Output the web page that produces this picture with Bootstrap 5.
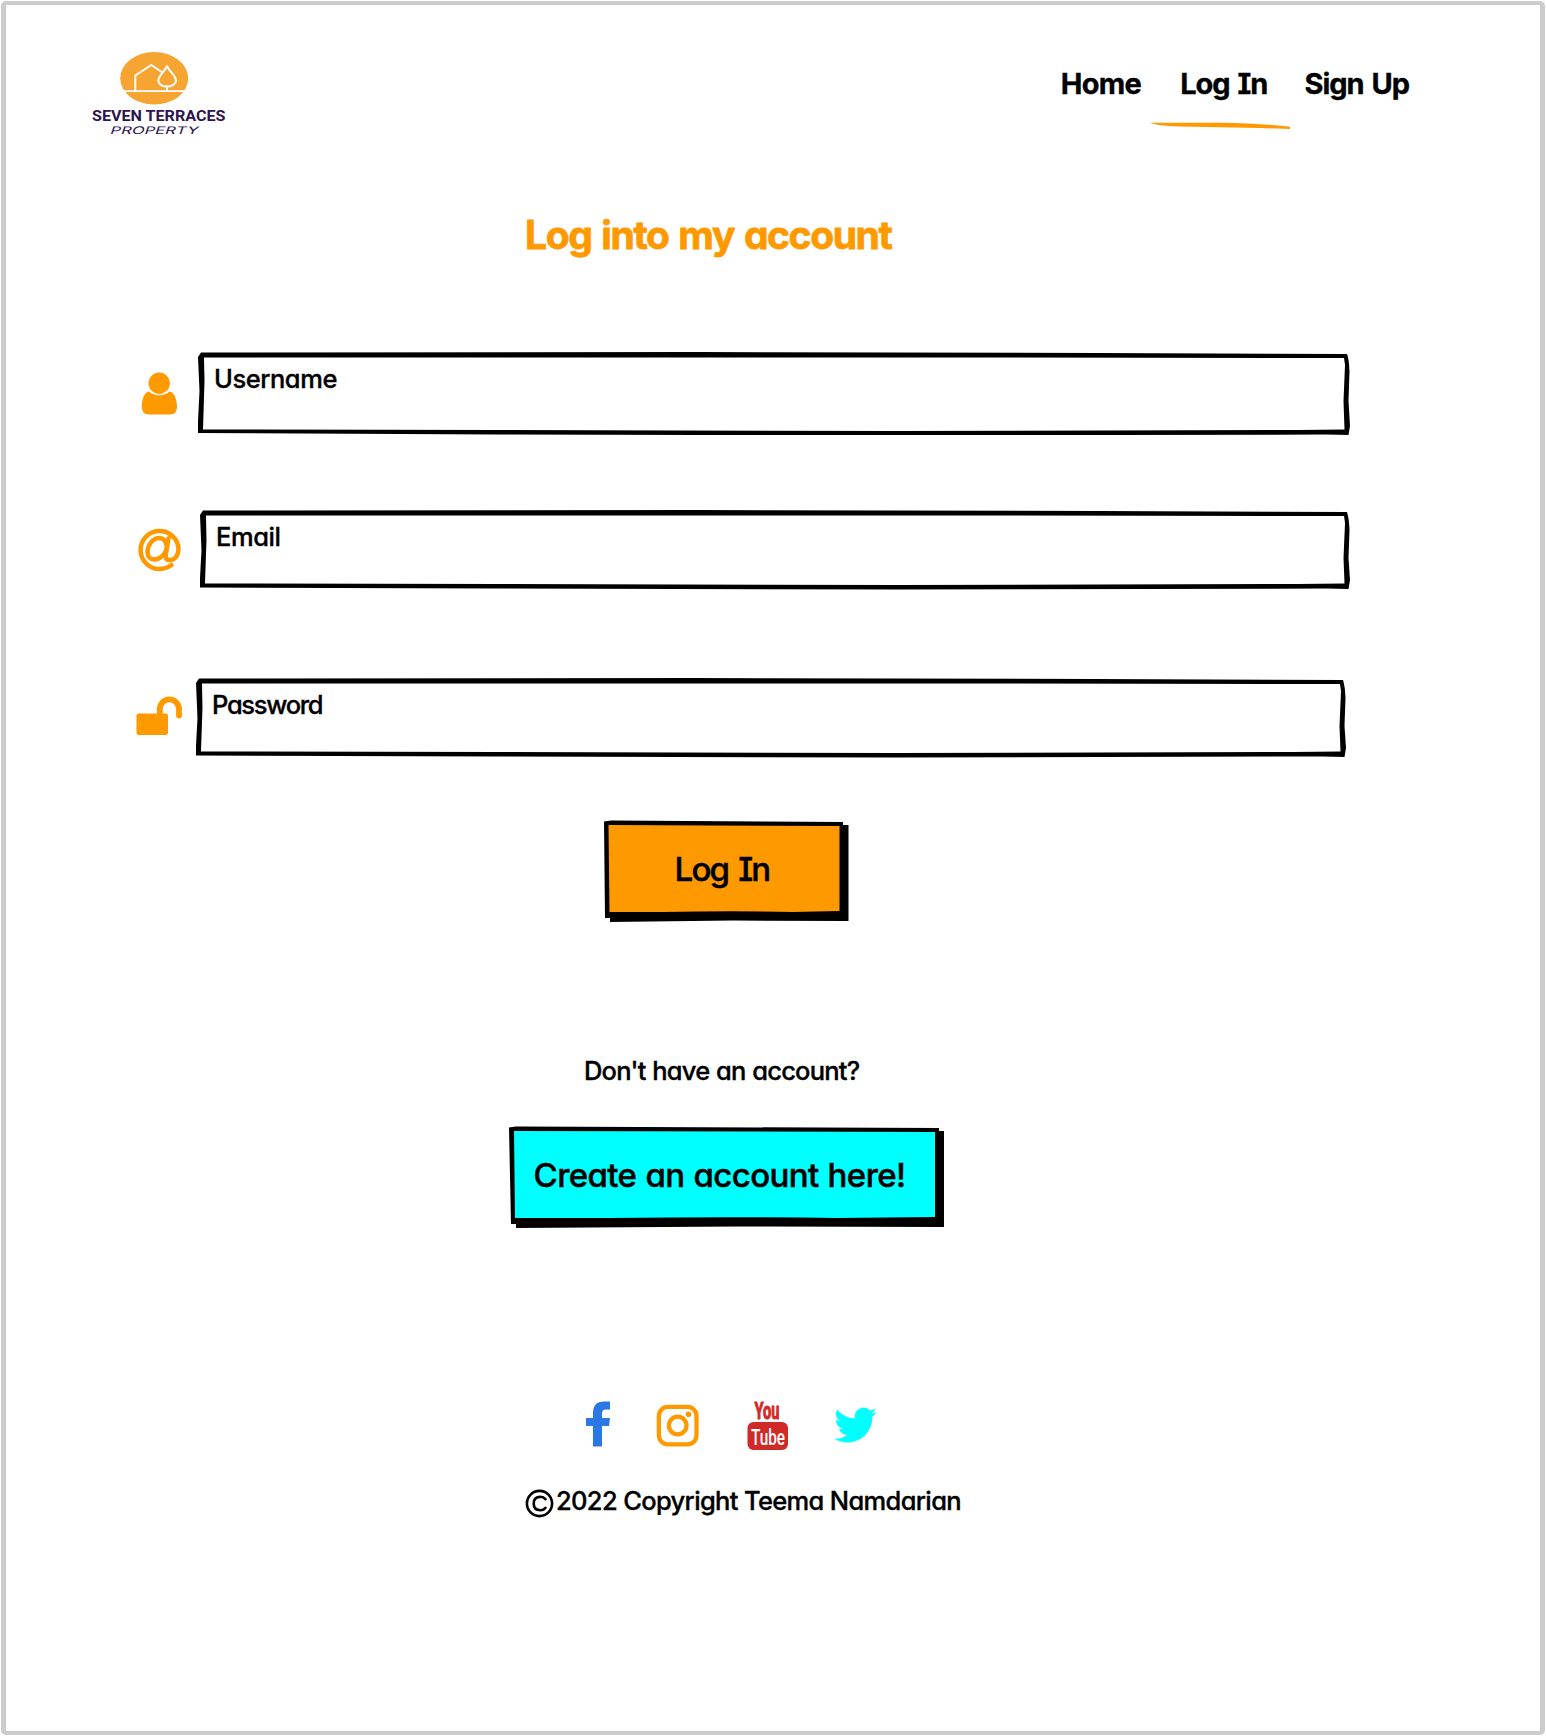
<!DOCTYPE html>
<html lang="en">
<head>
<meta charset="utf-8">
<meta name="viewport" content="width=device-width, initial-scale=1">
<title>Seven Terraces Property - Log In</title>
<link rel="stylesheet" href="https://cdn.jsdelivr.net/npm/bootstrap@5.3.0/dist/css/bootstrap.min.css">
<style>
  body { font-family: Inter, "Noto Sans", sans-serif; font-feature-settings: "cv11", "cv08"; font-weight: 500; color: #000; background: #fff; -webkit-text-stroke: .35px currentColor; stroke-linejoin: round; }
  .page-frame { width: 1544px; height: 1734px; margin: 1px; border: 5px solid #ccc; border-width: 4px 5px; border-radius: 5px; }
  .site-header { padding: 37px 131px 0 79px; height: 140px; }
  .logo-art { width: 150px; height: 100px; -webkit-text-stroke: 0; }
  .menu-links { margin-top: 22px; gap: 37px; }
  .menu-links .nav-link { font-size: 29px; font-weight: 700; line-height: 40px; color: #000; padding: 0; white-space: nowrap; letter-spacing: -1px; word-spacing: 2px; }
  .menu-links .nav-link:first-child { letter-spacing: -.7px; margin-right: 2px; }
  .stroke-line { left: -31px; top: 57px; width: 142px; height: 10px; }
  .page-title { margin: 65px 0 0 519px; font-size: 39px; line-height: 50px; font-weight: 700; color: #f90; letter-spacing: -1.4px; word-spacing: 2.1px; -webkit-text-stroke-width: .8px; }
  .login-form { padding-left: 126px; }
  .field-row { height: 84px; }
  .field-icon { width: 54px; height: 60px; margin-top: 12px; fill: #f90; }
  .sketch-field { width: 1154px; height: 84px; padding: 7px 0 0 17px; font-size: 25.5px; line-height: 40px; letter-spacing: -.45px; }
  .sketch-field label { position: relative; }
  .sketch-bg { left: 0; top: 0; width: 100%; height: 100%; }
  .sketch-btn { padding: 0; border: 0; font-size: 33px; font-weight: 500; line-height: 50px; color: #000; font-feature-settings: inherit; height: 103px; -webkit-text-stroke: .5px #000; }
  .sketch-btn span { position: relative; display: inline-block; padding-bottom: 6px; }
  .btn-login { width: 246px; margin: 58px 0 0 597px; letter-spacing: -1.8px; word-spacing: 3px; }
  .btn-login span { padding-right: 8px; }
  .btn-create { width: 437px; margin: 35px 0 0 502px; letter-spacing: -.6px; word-spacing: .8px; }
  .btn-create span { padding-right: 14px; }
  .hint { margin: 128px 0 0 578px; font-size: 25.5px; line-height: 40px; letter-spacing: -.8px; word-spacing: .7px; }
  .socials { margin: 167px 0 0 574px; height: 60px; -webkit-text-stroke: 0; }
  .copyright { margin: 25px 0 0 519px; font-size: 25.5px; line-height: 40px; letter-spacing: -.65px; gap: 2px; }
</style>
</head>
<body>
<main class="page-frame d-flex flex-column">
  <header class="site-header d-flex justify-content-between align-items-start">
    <a href="#" class="d-block" aria-label="Seven Terraces Property">
      <svg class="logo-art d-block" viewBox="85 42 150 100">
        <ellipse cx="154.2" cy="78.3" rx="34" ry="26.3" fill="#f6a432"/>
        <g fill="none" stroke="#fff" stroke-width="2" stroke-linejoin="round">
          <path d="M123 91.2H185" stroke-width="1.7"/>
          <path d="M135.3 91V75.5L151.3 65L162.5 72.5"/>
          <path d="M167 66.2C164 72 158.3 76 158.3 80.5C158.3 84 162 86.5 167 86.5C172 86.5 176 84 176 80.5C176 76 170 72 167 66.2ZM167 86.5V91"/>
        </g>
        <text x="92" y="120.5" font-family="Roboto" font-weight="700" font-size="14.8" fill="#2c1450" textLength="133.5" lengthAdjust="spacingAndGlyphs">SEVEN TERRACES</text>
        <text transform="translate(109.5 134) skewX(-18)" font-family="Inter" font-weight="400" font-size="10.5" fill="#2c1450" textLength="88" lengthAdjust="spacingAndGlyphs">PROPERTY</text>
      </svg>
    </a>
    <nav class="nav flex-nowrap menu-links">
      <a class="nav-link" href="#">Home</a>
      <a class="nav-link position-relative" href="#">Log In
        <svg class="stroke-line position-absolute" viewBox="0 0 142 10"><path d="M1 1.8L70 1.8Q115 2.5 141 5.8V8L110 7L30 5.5Q8 4.8 1 1.8Z" fill="#f90"/></svg>
      </a>
      <a class="nav-link" href="#">Sign Up</a>
    </nav>
  </header>

  <h1 class="page-title">Log into my account</h1>

  <form class="login-form">
    <div class="field-row d-flex" style="margin-top:91px">
      <svg class="field-icon" viewBox="132 363 54 60"><circle cx="159.2" cy="383.2" r="10.7"/><path d="M149 391.5C144 392 141.8 400 141.8 407Q141.8 414.5 149 414.5H170Q177 414.5 177 407C177 400 174.5 392 169.5 391.5Q165 395.3 159.2 395.3Q153.5 395.3 149 391.5Z"/></svg>
      <div class="sketch-field position-relative" style="margin-left:11px;padding-top:8px">
        <svg class="sketch-bg position-absolute" viewBox="0 0 1154 84" preserveAspectRatio="none"><path fill-rule="evenodd" d="M4 1.5L500 1L900 2L1150 3Q1152 8 1152.5 20L1151.5 50L1153 75L1151.5 84L1130 83.5L700 84.5L300 83.5L1 82L1 70L2.5 40L1 6ZM7 6.5L7.5 30L6 78.5L300 79L700 80L1100 79L1147.5 78.5L1146.5 50L1148 14L1147 7L800 6.5Z"/></svg>
        <label>Username</label>
      </div>
    </div>
    <div class="field-row d-flex" style="margin-top:75px">
      <svg class="field-icon" viewBox="132 523 54 60"><path d="M171.5 566Q166 570 158.8 570A19 19 0 1 1 178.5 549C178.5 558 174 561 169.8 561C166 561 165 559 166 555L168.5 539.5M167 548C166 541 163 539 159.5 539C152 539 147.5 547 147.5 553C147.5 557 150 560.5 154.5 560.5C161 560.5 166 554 167 548Z" fill="none" stroke="#f90" stroke-width="4.5" stroke-linecap="round"/></svg>
      <div class="sketch-field position-relative" style="margin-left:13px;width:1152px;height:80px">
        <svg class="sketch-bg position-absolute" viewBox="0 0 1154 80" preserveAspectRatio="none"><path fill-rule="evenodd" d="M4 .5L500 0L900 1L1150 2Q1152 8 1152.5 20L1151.5 48L1153 70L1151.5 79L1130 78.5L700 79.5L300 78.5L1 77.5L1 68L2.5 40L1 5ZM7 5.5L7.5 30L6 73.5L300 74L700 75L1100 74L1147.5 73.5L1146.5 48L1148 13L1147 6L800 5.5Z"/></svg>
        <label>Email</label>
      </div>
    </div>
    <div class="field-row d-flex" style="margin-top:84px">
      <svg class="field-icon" viewBox="132 690 54 60"><rect x="136.5" y="713.5" width="31.5" height="21.5" rx="2.5"/><path d="M159.8 715V709A9.600 9.600 0 0 1 179 709V715.500" fill="none" stroke="#f90" stroke-width="5.800" stroke-linecap="round"/></svg>
      <div class="sketch-field position-relative" style="margin-left:9px;width:1152px;height:80px">
        <svg class="sketch-bg position-absolute" viewBox="0 0 1154 80" preserveAspectRatio="none"><path fill-rule="evenodd" d="M4 .5L500 0L900 1L1150 2Q1152 8 1152.5 20L1151.5 48L1153 70L1151.5 79L1130 78.5L700 79.5L300 78.5L1 77.5L1 68L2.5 40L1 5ZM7 5.5L7.5 30L6 73.5L300 74L700 75L1100 74L1147.5 73.5L1146.5 48L1148 13L1147 6L800 5.5Z"/></svg>
        <label style="letter-spacing:-1.3px">Password</label>
      </div>
    </div>
  </form>

  <button class="btn rounded-0 sketch-btn btn-login position-relative" type="button">
    <svg class="sketch-bg position-absolute" viewBox="0 0 246 103"><path d="M1 1.5L8 .5L240 2V5H245.5V101L130 100.5L7 102V98H2Z"/><path d="M5.5 5L236.5 6V91L190 92Q130 90.5 60 92L6.5 92Z" fill="#f90"/></svg>
    <span>Log In</span>
  </button>

  <p class="hint">Don't have an account?</p>

  <button class="btn rounded-0 sketch-btn btn-create position-relative" type="button">
    <svg class="sketch-bg position-absolute" viewBox="0 0 437 103"><path d="M1 1.5L8 .5L431 2V5H436V101L230 100.5L8 102V98H3Z"/><path d="M6 5L427 6V91L330 92Q230 90.5 100 92L7 92Z" fill="#0ff"/></svg>
    <span>Create an account here!</span>
  </button>

  <div class="socials">
    <svg class="d-block" width="320" height="60" viewBox="580 1396 320 60">
      <path d="M593 1446.5V1426H586V1418H593V1413Q593 1401.5 604 1401.5H610V1409.5H606Q602 1409.5 602 1413.5V1418H610L609 1426H602V1446.5Z" fill="#2b78e4"/>
      <g fill="none" stroke="#f90" stroke-width="4.3"><rect x="658.9" y="1406.9" width="37.6" height="37.4" rx="9"/><circle cx="677.7" cy="1425.5" r="8.8"/></g><circle cx="688.5" cy="1414.3" r="2.8" fill="#f90"/>
      <rect x="747.5" y="1422" width="40.5" height="28" rx="6" fill="#cf2a27"/>
      <g font-family="Roboto" font-weight="700"><text x="754.5" y="1419" font-size="23" fill="#cf2a27" stroke="#cf2a27" stroke-width="1" textLength="25" lengthAdjust="spacingAndGlyphs">You</text><text x="751" y="1444.5" font-size="22.5" font-weight="500" fill="#fff" textLength="34" lengthAdjust="spacingAndGlyphs">Tube</text></g>
      <path transform="translate(834.2 1402.5) scale(2.66)" d="M5.026 15c6.038 0 9.341-5.003 9.341-9.334 0-.14 0-.282-.006-.422A6.685 6.685 0 0 0 16 3.542a6.658 6.658 0 0 1-1.889.518 3.301 3.301 0 0 0 1.447-1.817 6.533 6.533 0 0 1-2.087.793A3.286 3.286 0 0 0 7.875 6.03a9.325 9.325 0 0 1-6.767-3.429 3.289 3.289 0 0 0 1.018 4.382A3.323 3.323 0 0 1 .64 6.575v.045a3.288 3.288 0 0 0 2.632 3.218 3.203 3.203 0 0 1-.865.115 3.23 3.23 0 0 1-.614-.057 3.283 3.283 0 0 0 3.067 2.277A6.588 6.588 0 0 1 .78 13.58a6.32 6.32 0 0 1-.78-.045A9.344 9.344 0 0 0 5.026 15z" fill="#0ff"/>
    </svg>
  </div>

  <footer class="copyright d-flex align-items-center">
    <svg class="mt-1" width="29" height="29" viewBox="0 0 29 29" fill="none" stroke="#000" stroke-width="2.6" stroke-linecap="round" aria-label="Copyright"><circle cx="14.5" cy="14.5" r="12.6"/><path d="M20.5 10.200Q18.500 7.800 15.500 7.800Q8.700 8 8.700 14.500Q8.700 21.200 15.500 21.200Q18.800 21.200 20.500 18.800"/></svg>
    <span>2022 Copyright Teema Namdarian</span>
  </footer>
</main>
<script src="https://cdn.jsdelivr.net/npm/bootstrap@5.3.0/dist/js/bootstrap.bundle.min.js"></script>
</body>
</html>
